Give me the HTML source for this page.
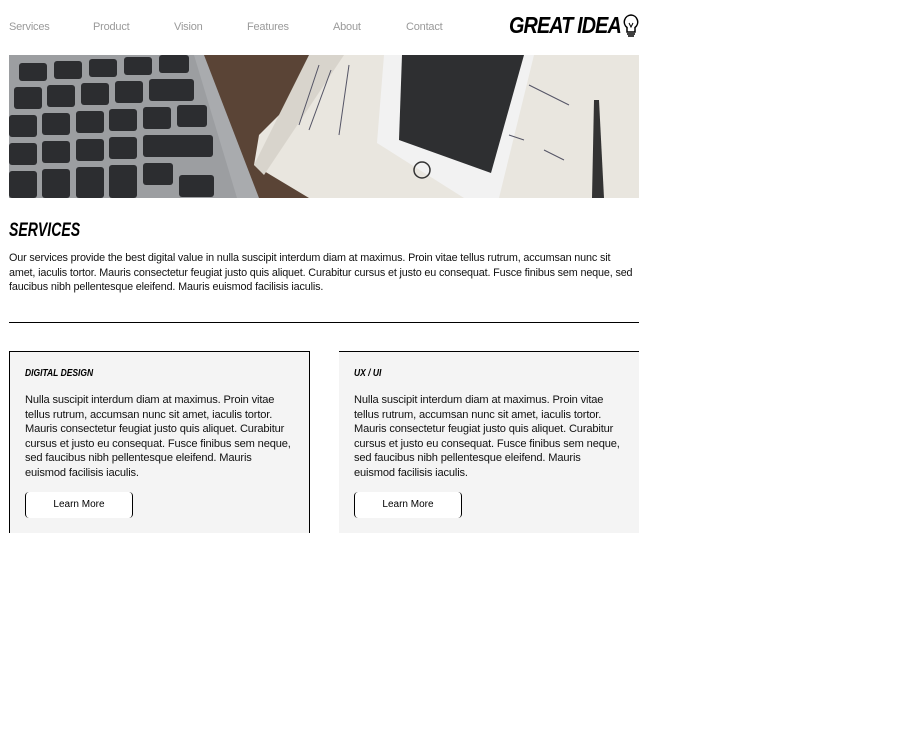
<!DOCTYPE html>
<html><head><meta charset="utf-8"><style>
body{margin:0;background:#fff;font-family:"Liberation Sans",sans-serif;width:908px;height:753px;position:relative;overflow:hidden}
.nav a{position:absolute;top:21px;font-size:11px;color:#9a9a9a;text-decoration:none;letter-spacing:-0.2px}
.logo{position:absolute;left:509px;top:12px;font-size:23px;font-weight:900;font-style:italic;letter-spacing:-1px;color:#000;transform:scaleX(0.86);transform-origin:left}
.hero{position:absolute;left:9px;top:55px;width:630px;height:143px;overflow:hidden}
h2{position:absolute;left:9px;top:220px;margin:0;font-size:19px;font-weight:900;font-style:italic;transform:scaleX(0.74);transform-origin:left}
.intro{position:absolute;left:9px;top:251px;width:630px;font-size:10.8px;line-height:14.5px;color:#111;margin:0;letter-spacing:-0.15px}
.hr{position:absolute;left:9px;top:322px;width:630px;height:1px;background:#000}
.card{position:absolute;top:351px;height:182px;background:#f4f4f4;box-sizing:border-box}
.card h3{position:absolute;left:15px;top:16px;margin:0;font-size:10px;font-weight:900;font-style:italic;transform:scaleX(0.85);transform-origin:left}
.card p{position:absolute;left:15px;top:41px;width:266px;margin:0;font-size:11.1px;line-height:14.5px;color:#111;letter-spacing:-0.15px}
.btn{position:absolute;left:15px;top:140px;width:106px;height:26px;background:#fff;border-left:1px solid #000;border-right:1px solid #000;border-radius:4px;font-size:10px;text-align:center;line-height:26px;color:#000}
</style></head><body>
<div class="nav">
<a style="left:9px">Services</a><a style="left:93px">Product</a><a style="left:174px">Vision</a><a style="left:247px">Features</a><a style="left:333px">About</a><a style="left:406px">Contact</a>
</div>
<div class="logo">GREAT IDEA</div>
<svg style="position:absolute;left:621px;top:13px" width="20" height="27" viewBox="0 0 20 27"><path d="M10 2a7 7 0 0 0-4 12.5V19h8v-4.5A7 7 0 0 0 10 2z M6 21h8 M7 23h6" fill="none" stroke="#000" stroke-width="1.5"/><path d="M8 10l2 4 2-4" fill="none" stroke="#000" stroke-width="1"/></svg>
<div class="hero"><svg width="630" height="143" viewBox="0 0 630 143">
<rect width="630" height="143" fill="#5a4436"/>
<polygon points="0,0 195,0 250,143 0,143" fill="#a9abae"/>
<polygon points="0,0 185,0 228,143 0,143" fill="#9c9ea1"/>
<g fill="#2c2d30">
<rect x="10" y="8" width="28" height="18" rx="3"/><rect x="45" y="6" width="28" height="18" rx="3"/><rect x="80" y="4" width="28" height="18" rx="3"/><rect x="115" y="2" width="28" height="18" rx="3"/><rect x="150" y="0" width="30" height="18" rx="3"/>
<rect x="5" y="32" width="28" height="22" rx="3"/><rect x="38" y="30" width="28" height="22" rx="3"/><rect x="72" y="28" width="28" height="22" rx="3"/><rect x="106" y="26" width="28" height="22" rx="3"/><rect x="140" y="24" width="45" height="22" rx="3"/>
<rect x="0" y="60" width="28" height="22" rx="3"/><rect x="33" y="58" width="28" height="22" rx="3"/><rect x="67" y="56" width="28" height="22" rx="3"/><rect x="100" y="54" width="28" height="22" rx="3"/><rect x="134" y="52" width="28" height="22" rx="3"/><rect x="168" y="50" width="30" height="22" rx="3"/>
<rect x="0" y="88" width="28" height="22" rx="3"/><rect x="33" y="86" width="28" height="22" rx="3"/><rect x="67" y="84" width="28" height="22" rx="3"/><rect x="100" y="82" width="28" height="22" rx="3"/><rect x="134" y="80" width="70" height="22" rx="3"/>
<rect x="0" y="116" width="28" height="27" rx="3"/><rect x="33" y="114" width="28" height="29" rx="3"/><rect x="67" y="112" width="28" height="31" rx="3"/><rect x="100" y="110" width="28" height="33" rx="3"/><rect x="134" y="108" width="30" height="22" rx="3"/><rect x="170" y="120" width="35" height="22" rx="3"/>
</g>
<polygon points="330,0 630,0 630,143 300,143 245,110 250,80" fill="#e9e6df"/>
<polygon points="300,0 335,0 255,120 245,110" fill="#d8d4cc"/>
<polygon points="375,0 525,0 490,143 455,143 368,88" fill="#f2f2f2"/>
<polygon points="393,0 515,0 482,118 390,85" fill="#2e2f31"/>
<circle cx="413" cy="115" r="8" fill="none" stroke="#333" stroke-width="1.5"/>
<polygon points="585,45 590,45 595,143 583,143" fill="#333"/>
<g stroke="#556" stroke-width="1" fill="none"><path d="M290 70l20-60M300 75l22-60M330 80l10-70M520 30l40 20M535 95l20 10M500 80l15 5"/></g>
</svg></div>
<h2>SERVICES</h2>
<p class="intro">Our services provide the best digital value in nulla suscipit interdum diam at maximus. Proin vitae tellus rutrum, accumsan nunc sit amet, iaculis tortor. Mauris consectetur feugiat justo quis aliquet. Curabitur cursus et justo eu consequat. Fusce finibus sem neque, sed faucibus nibh pellentesque eleifend. Mauris euismod facilisis iaculis.</p>
<div class="hr"></div>
<div class="card" style="left:9px;width:301px;border:1px solid #000;border-bottom:none">
<h3>DIGITAL DESIGN</h3>
<p>Nulla suscipit interdum diam at maximus. Proin vitae tellus rutrum, accumsan nunc sit amet, iaculis tortor. Mauris consectetur feugiat justo quis aliquet. Curabitur cursus et justo eu consequat. Fusce finibus sem neque, sed faucibus nibh pellentesque eleifend. Mauris euismod facilisis iaculis.</p>
<div class="btn">Learn More</div>
</div>
<div class="card" style="left:339px;width:300px;border-top:1px solid #000">
<h3 style="left:15px">UX / UI</h3>
<p style="left:15px">Nulla suscipit interdum diam at maximus. Proin vitae tellus rutrum, accumsan nunc sit amet, iaculis tortor. Mauris consectetur feugiat justo quis aliquet. Curabitur cursus et justo eu consequat. Fusce finibus sem neque, sed faucibus nibh pellentesque eleifend. Mauris euismod facilisis iaculis.</p>
<div class="btn" style="left:15px">Learn More</div>
</div>
</body></html>
